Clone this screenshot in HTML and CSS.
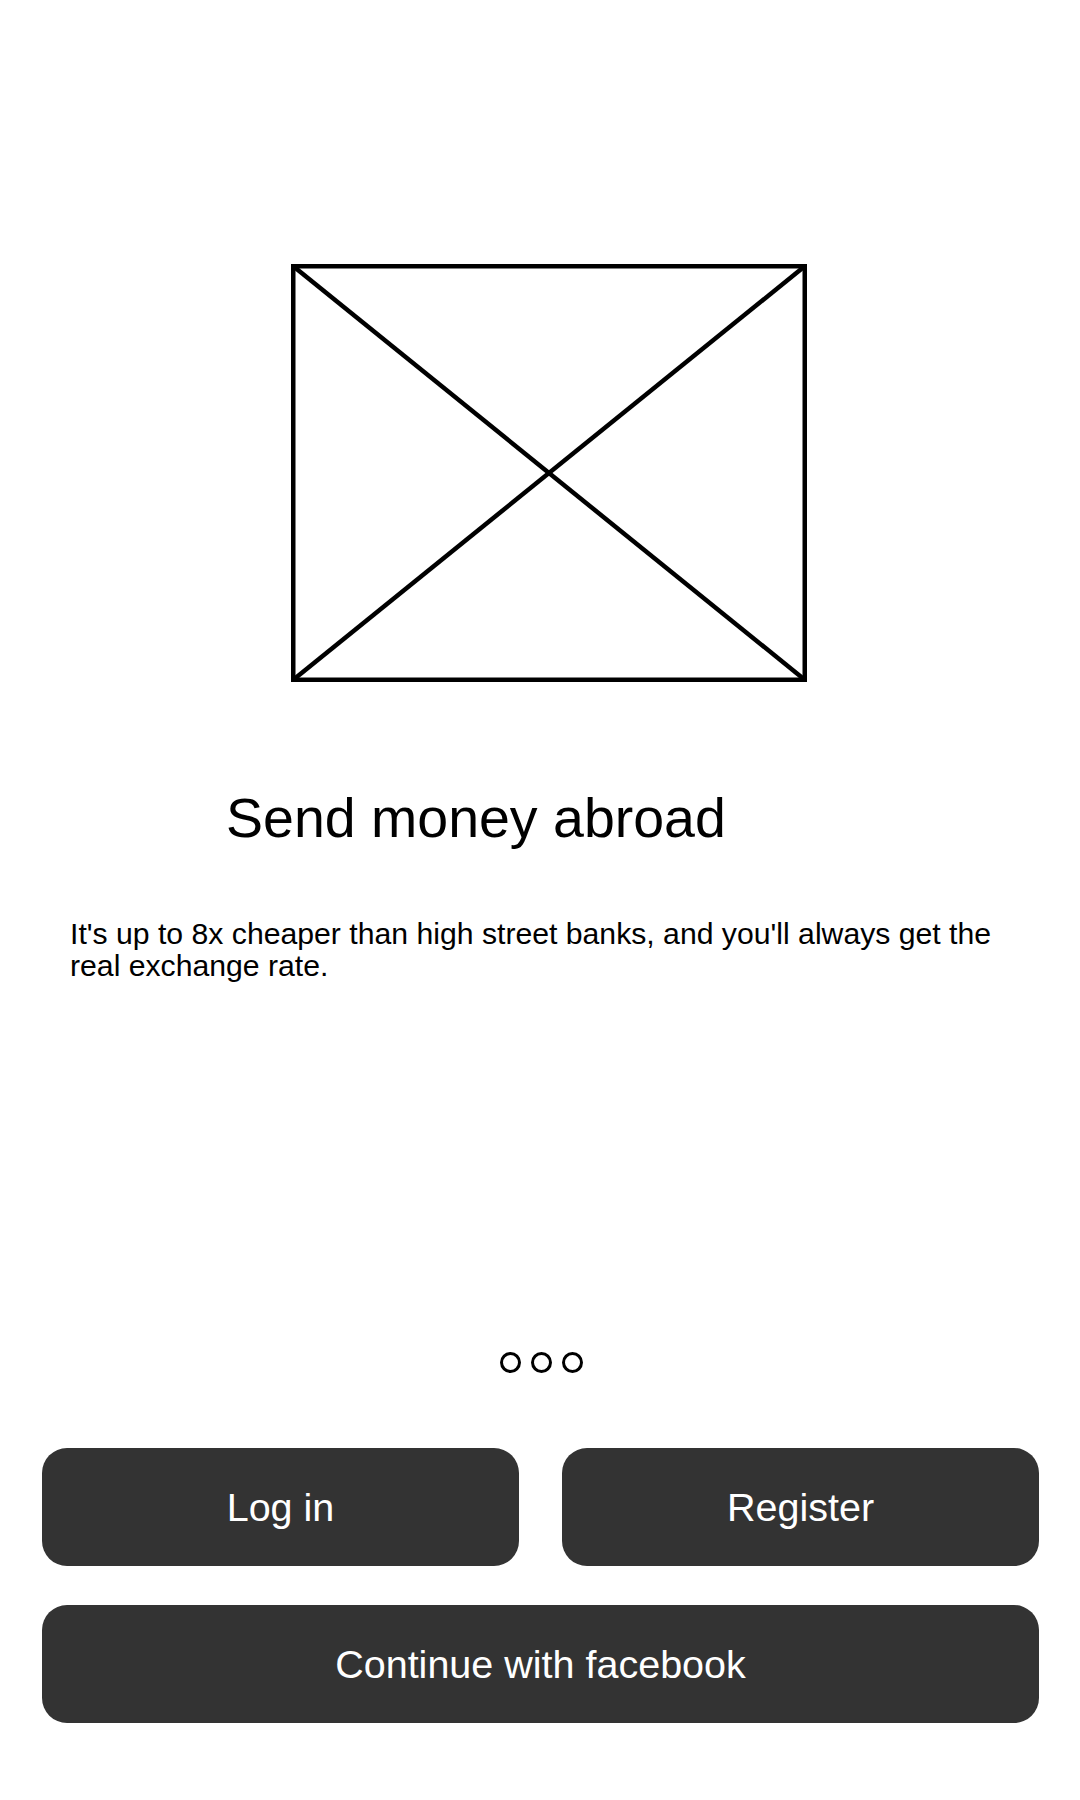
FILE: index.html
```html
<!DOCTYPE html>
<html lang="en">
<head>
<meta charset="utf-8">
<title>Send money abroad</title>
<link rel="stylesheet" href="styles.css">
</head>
<body>
<main class="screen">
  <section class="slide">
    <div class="illus">
      <svg width="516" height="418" viewBox="0 0 516 418" xmlns="http://www.w3.org/2000/svg">
        <rect x="2.25" y="2.25" width="511.5" height="413.5" fill="none" stroke="#000" stroke-width="4.5"/>
        <line x1="2" y1="2" x2="514" y2="416" stroke="#000" stroke-width="4.5"/>
        <line x1="514" y1="2" x2="2" y2="416" stroke="#000" stroke-width="4.5"/>
      </svg>
    </div>
    <h1 class="title">Send money abroad</h1>
    <p class="desc">It's up to 8x cheaper than high street banks, and you'll always get the real exchange rate.</p>
  </section>
  <div class="dots">
    <span class="dot"></span>
    <span class="dot"></span>
    <span class="dot"></span>
  </div>
  <div class="actions">
    <button class="btn">Log in</button>
    <button class="btn">Register</button>
    <button class="btn btn-wide">Continue with facebook</button>
  </div>
</main>
</body>
</html>
```
FILE: styles.css
```css
html, body {
  margin: 0;
  padding: 0;
  background: #ffffff;
}

body {
  font-family: "Liberation Sans", Arial, sans-serif;
  color: #000000;
}

.screen {
  width: 1080px;
  height: 1800px;
  display: flex;
  flex-direction: column;
}

.slide {
  padding-top: 264px;
}

.illus {
  margin-left: 291px;
  width: 516px;
  height: 418px;
}

.illus svg {
  display: block;
}

.title {
  margin: 104px 0 0 0;
  padding-left: 226px;
  font-size: 55.5px;
  line-height: 64px;
  font-weight: normal;
}

.desc {
  margin: 68px 0 0 0;
  padding: 0 70px;
  font-size: 30.2px;
  line-height: 32px;
}

.dots {
  margin-top: 370px;
  display: flex;
  justify-content: center;
  gap: 10px;
  padding-left: 2px;
}

.dot {
  width: 21px;
  height: 21px;
  box-sizing: border-box;
  border: 3px solid #000;
  border-radius: 50%;
}

.actions {
  margin-top: 75px;
  padding: 0 41px 0 42px;
  display: grid;
  grid-template-columns: 1fr 1fr;
  column-gap: 43px;
  row-gap: 39px;
}

.btn {
  height: 118px;
  border: none;
  border-radius: 25px;
  background: #333333;
  color: #ffffff;
  font-family: "Liberation Sans", Arial, sans-serif;
  font-size: 39.5px;
  padding: 0;
}

.btn-wide {
  grid-column: 1 / span 2;
}
```
